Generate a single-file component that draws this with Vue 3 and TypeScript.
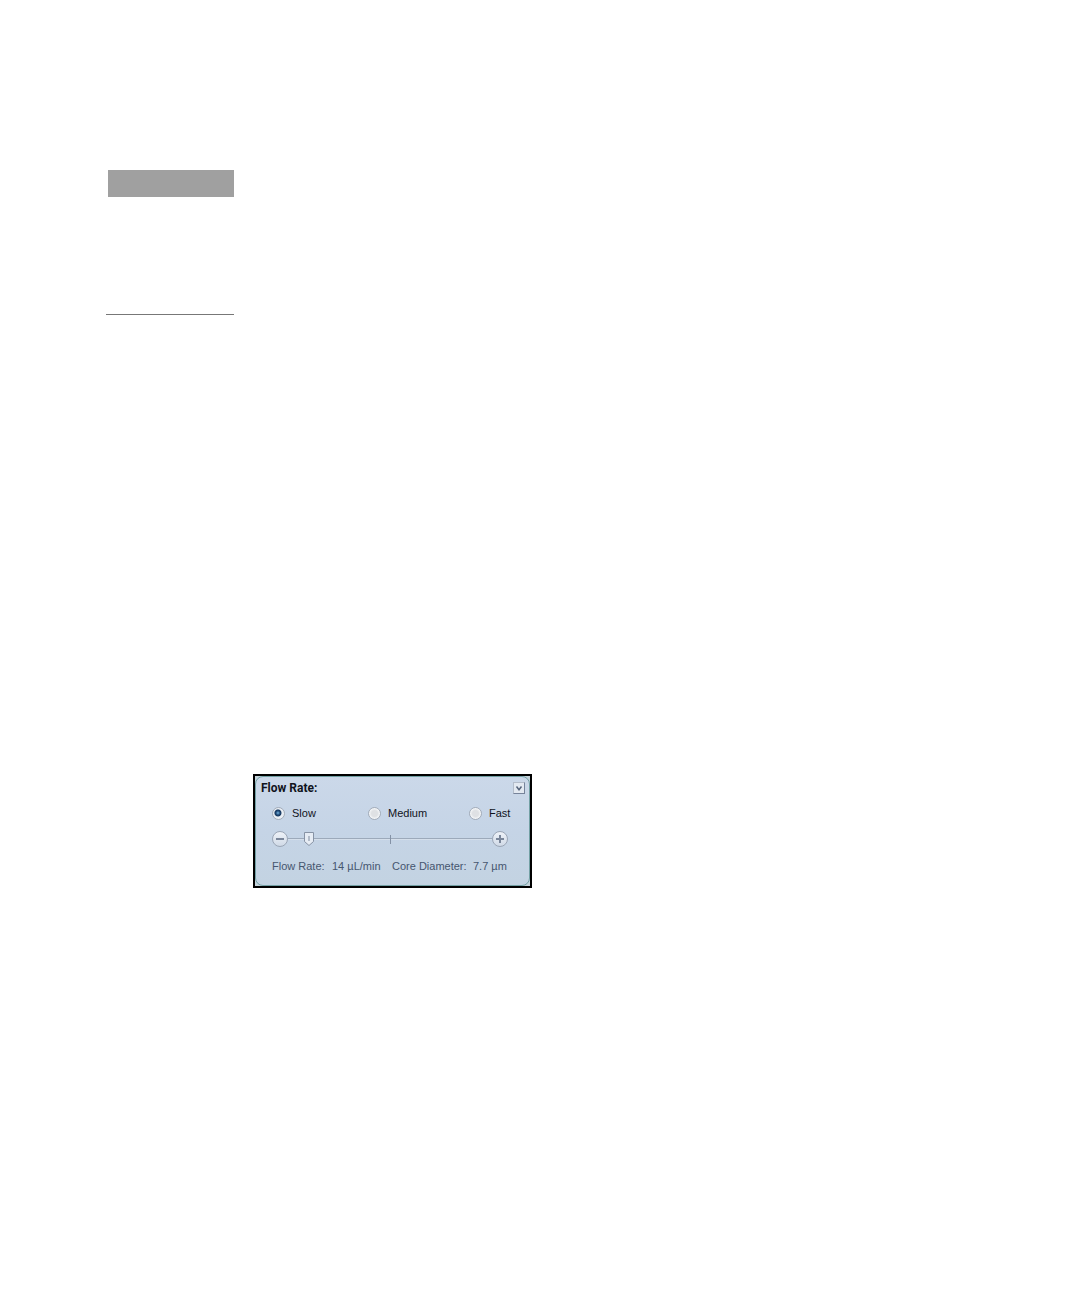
<script setup lang="ts">
import { ref } from 'vue'

interface RateOption {
  id: string
  label: string
}

const options: RateOption[] = [
  { id: 'slow', label: 'Slow' },
  { id: 'medium', label: 'Medium' },
  { id: 'fast', label: 'Fast' },
]

const selected = ref<string>('slow')
const level = ref<number>(8)

function step(delta: number): void {
  level.value = Math.min(100, Math.max(0, level.value + delta))
}
</script>

<template>
  <main class="page">
    <aside class="margin-note">
      <div class="note-bar"></div>
      <hr class="note-rule" />
    </aside>

    <section class="panel" aria-labelledby="panel-title">
      <div class="panel-body">
        <header class="panel-head">
          <h2 id="panel-title" class="title">Flow Rate:</h2>
          <button class="toggle" type="button" aria-label="Collapse">
            <svg width="12" height="12" viewBox="0 0 12 12">
              <path d="M3.5 4.5 L6 7.7 L8.5 4.5" fill="none" stroke="#56647b" stroke-width="1.5" />
            </svg>
          </button>
        </header>

        <div class="options" role="radiogroup" aria-labelledby="panel-title">
          <label v-for="o in options" :key="o.id" class="option" :for="o.id">
            <input :id="o.id" v-model="selected" class="radio" type="radio" name="rate" :value="o.id" />
            <span>{{ o.label }}</span>
          </label>
        </div>

        <div class="slider-row">
          <button class="round" type="button" aria-label="Decrease" @click="step(-1)">
            <svg width="16" height="16" viewBox="0 0 16 16">
              <rect x="4" y="7" width="8" height="2" fill="#7a869a" />
            </svg>
          </button>
          <input v-model.number="level" class="slider" type="range" min="0" max="100" aria-label="Flow rate" />
          <button class="round" type="button" aria-label="Increase" @click="step(1)">
            <svg width="16" height="16" viewBox="0 0 16 16">
              <path d="M4 7h3V4h2v3h3v2H9v3H7V9H4z" fill="#7a869a" />
            </svg>
          </button>
        </div>

        <dl class="readings">
          <dt>Flow Rate:</dt>
          <dd>14 µL/min</dd>
          <dt>Core Diameter:</dt>
          <dd>7.7 µm</dd>
        </dl>
      </div>
    </section>
  </main>
</template>

<style>
body {
  margin: 0;
  background: #fff;
}
</style>

<style scoped>
.page {
  box-sizing: border-box;
  min-height: 100vh;
  padding: 170px 106px 0;
  display: grid;
  grid-template-columns: 128px minmax(0, 1fr);
  grid-template-rows: 604px auto;
  column-gap: 19px;
  align-content: start;
  font-family: "Liberation Sans", Arial, sans-serif;
}

.margin-note {
  grid-column: 1;
}

.note-bar {
  height: 27px;
  margin-left: 2px;
  background: #a0a0a0;
}

.note-rule {
  height: 1px;
  margin: 117px 0 0;
  border: 0;
  background: #777;
}

.panel {
  grid-column: 2;
  grid-row: 2;
  box-sizing: border-box;
  width: 100%;
  max-width: 279px;
  border: 2px solid #000;
  background: #c3d2da;
}

.panel-body {
  border: 1px solid #72a0a4;
  border-radius: 8px;
  padding: 4px 4px 12px 5px;
  background: linear-gradient(#cbd8e9, #c5d4e6 50%, #c3d3e2);
}

.panel-head {
  display: flex;
  justify-content: space-between;
  align-items: center;
  height: 14px;
}

.title {
  margin: 0;
  font-family: Roboto, sans-serif;
  font-size: 12px;
  line-height: 14px;
  font-weight: 700;
  color: #10131c;
}

.toggle {
  box-sizing: border-box;
  width: 12px;
  height: 12px;
  padding: 0;
  border: 1px solid;
  border-color: #b4bdca #76839a #76839a #b4bdca;
  background: #e3e9f1;
  display: flex;
  align-items: center;
  justify-content: center;
}

.toggle svg {
  flex: none;
}

.options {
  display: grid;
  grid-template-columns: 96px 101px auto;
  margin: 11px 11px 0;
}

.option {
  display: flex;
  align-items: center;
  gap: 7px;
  font-size: 11px;
  line-height: 14px;
  color: #10131c;
}

.radio {
  appearance: none;
  box-sizing: border-box;
  width: 13px;
  height: 13px;
  margin: 0;
  border: 1px solid #a3acb9;
  border-radius: 50%;
  background: radial-gradient(circle, #dfe1e4 0 3px, #f2f4f6 5px);
}

.radio:checked {
  background: radial-gradient(circle at 45% 45%, #7ab8e4 0, #1f4a78 2px, #17385f 3px, #e9eef4 4px);
}

.slider-row {
  display: flex;
  align-items: center;
  margin: 11px 17px 0 11px;
}

.round {
  flex: none;
  box-sizing: border-box;
  width: 16px;
  height: 16px;
  padding: 0;
  border: 1px solid #9ba6b6;
  border-radius: 50%;
  background: linear-gradient(#eef2f8, #d0dae7);
  display: flex;
  align-items: center;
  justify-content: center;
}

.round svg {
  flex: none;
}

.slider {
  appearance: none;
  flex: 1;
  min-width: 0;
  height: 16px;
  margin: 0;
  background:
    linear-gradient(#8492a6, #8492a6) center / 1px 9px no-repeat,
    linear-gradient(#9ca9ba 50%, #d5dfeb 50%) center / 100% 2px no-repeat;
}

.slider::-webkit-slider-thumb {
  appearance: none;
  width: 10px;
  height: 14px;
  border: 0;
  background: url("data:image/svg+xml,%3Csvg xmlns='http://www.w3.org/2000/svg' width='10' height='14'%3E%3Cpath d='M.5 .5h9v9L5 13.5.5 9.5z' fill='%23e6ecf4' stroke='%238793a5'/%3E%3Cpath d='M5 4v5' stroke='%237e8b9e'/%3E%3C/svg%3E") no-repeat;
}

.readings {
  display: grid;
  grid-template-columns: 60px 60px 81px auto;
  margin: 12px 0 0 11px;
  font-size: 11px;
  line-height: 14px;
  color: #46566f;
  white-space: nowrap;
}

.readings dt,
.readings dd {
  margin: 0;
}
</style>
